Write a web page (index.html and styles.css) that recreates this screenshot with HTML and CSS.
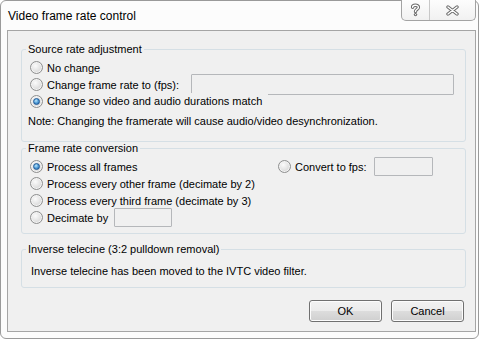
FILE: index.html
```html
<!DOCTYPE html>
<html>
<head>
<meta charset="utf-8">
<link rel="stylesheet" href="styles.css">
</head>
<body>
<div class="window">
  <div class="titlebar">
    <span class="title">Video frame rate control</span>
    <div class="caption-buttons">
      <div class="cb help">
        <svg width="11" height="14" viewBox="0 0 11 14">
          <path d="M2.6 4.2 C2.6 1.6 8.4 1.6 8.4 4.2 C8.4 6.4 5.5 6.2 5.5 8.6" fill="none" stroke="#6b6b6b" stroke-width="3.4" stroke-linecap="round"/>
          <circle cx="5.5" cy="11.6" r="1.7" fill="#6b6b6b"/>
          <path d="M2.6 4.2 C2.6 1.6 8.4 1.6 8.4 4.2 C8.4 6.4 5.5 6.2 5.5 8.6" fill="none" stroke="#fff" stroke-width="1.4" stroke-linecap="round"/>
          <circle cx="5.5" cy="11.6" r="0.7" fill="#fff"/>
        </svg>
      </div>
      <div class="cb close">
        <svg width="13" height="11" viewBox="0 0 13 11">
          <path d="M2 2 L11 9 M11 2 L2 9" fill="none" stroke="#6b6b6b" stroke-width="3.4" stroke-linecap="round"/>
          <path d="M2 2 L11 9 M11 2 L2 9" fill="none" stroke="#fff" stroke-width="1.4" stroke-linecap="round"/>
        </svg>
      </div>
    </div>
  </div>
  <div class="client">
    <div class="group g1">
      <span class="legend">Source rate adjustment</span>
      <div class="row"><span class="radio"></span><span>No change</span></div>
      <div class="row"><span class="opt w-fps"><span class="radio"></span><span>Change frame rate to (fps):</span></span><span class="input in-fps"></span></div>
      <div class="row over"><span class="radio checked"></span><span class="cover">Change so video and audio durations match</span></div>
      <div class="row note">Note: Changing the framerate will cause audio/video desynchronization.</div>
    </div>
    <div class="group g2">
      <span class="legend">Frame rate conversion</span>
      <div class="cols">
        <div class="col">
          <div class="row"><span class="radio checked"></span><span>Process all frames</span></div>
          <div class="row"><span class="radio"></span><span>Process every other frame (decimate by 2)</span></div>
          <div class="row"><span class="radio"></span><span>Process every third frame (decimate by 3)</span></div>
          <div class="row"><span class="opt w-dec"><span class="radio"></span><span>Decimate by</span></span><span class="input in-dec"></span></div>
        </div>
        <div class="col">
          <div class="row"><span class="opt w-conv"><span class="radio"></span><span>Convert to fps:</span></span><span class="input in-conv"></span></div>
        </div>
      </div>
    </div>
    <div class="group g3">
      <span class="legend">Inverse telecine (3:2 pulldown removal)</span>
      <div class="row">Inverse telecine has been moved to the IVTC video filter.</div>
    </div>
    <div class="buttons">
      <button class="btn">OK</button>
      <button class="btn">Cancel</button>
    </div>
  </div>
</div>
</body>
</html>
```
FILE: styles.css
```css
html, body {
  margin: 0;
  padding: 0;
}
body {
  width: 481px;
  height: 340px;
  background: #ffffff;
  overflow: hidden;
  font-family: "Liberation Sans", Arial, sans-serif;
  font-size: 11px;
  color: #000;
}
.window {
  box-sizing: border-box;
  width: 479px;
  height: 339px;
  border: 1px solid #9a9a9a;
  border-radius: 6px;
  background: #fcfcfc;
  display: flex;
  flex-direction: column;
}
.titlebar {
  height: 29px;
  display: flex;
  align-items: flex-start;
  justify-content: space-between;
}
.title {
  font-size: 12px;
  line-height: 14px;
  padding: 8px 0 0 7px;
  color: #000;
}
.caption-buttons {
  display: flex;
  margin: -1px 2px 0 0;
  border: 1px solid #a3a3a3;
  border-top: none;
  border-radius: 0 0 5px 5px;
  background: linear-gradient(#fdfdfd, #f1f1f1);
  height: 20px;
  overflow: hidden;
}
.cb {
  display: flex;
  align-items: center;
  justify-content: center;
}
.cb.help {
  width: 27px;
  border-right: 1px solid #c8c8c8;
}
.cb.close {
  width: 45px;
}
.client {
  flex: 1;
  margin: 0 2px 6px 6px;
  border: 1px solid #a5a5a5;
  background: #f0f0f0;
  display: flex;
  flex-direction: column;
}
.group {
  position: relative;
  border: 1px solid #d5dfe5;
  border-radius: 3px;
  margin: 0 9px 0 13px;
  padding-left: 8px;
}
.legend {
  position: absolute;
  left: 4px;
  top: -7px;
  line-height: 13px;
  padding: 0 2px;
  background: #f0f0f0;
}
.g1 {
  margin-top: 18px;
  padding-top: 9px;
  padding-bottom: 12px;
}
.g2 {
  margin-top: 6px;
  padding-top: 9px;
  padding-bottom: 7px;
}
.g3 {
  margin-top: 15px;
  padding-top: 12px;
  padding-bottom: 8px;
  padding-left: 9px;
}
.row {
  height: 17px;
  display: flex;
  align-items: center;
  white-space: nowrap;
}
.row.note {
  margin-top: 2px;
  margin-left: -2px;
}
.row.over {
  position: relative;
  z-index: 1;
}
.cover {
  background: #f0f0f0;
  line-height: 17px;
  padding-right: 6px;
}
.opt {
  display: flex;
  align-items: center;
}
.w-fps { width: 161px; }
.w-dec { width: 84px; }
.w-conv { width: 96px; }
.cols {
  display: grid;
  grid-template-columns: 248px 1fr;
}
.radio {
  box-sizing: border-box;
  width: 13px;
  height: 13px;
  flex: none;
  border-radius: 50%;
  border: 1px solid #8e8f8f;
  background: radial-gradient(circle at 40% 35%, #fbfbfb 0%, #e6e6e6 45%, #c9c9c9 100%);
  box-shadow: inset 0 0 0 1px #f4f4f4;
  margin-right: 4px;
  position: relative;
}
.radio.checked::after {
  content: "";
  position: absolute;
  left: 2px;
  top: 2px;
  width: 7px;
  height: 7px;
  box-sizing: border-box;
  border-radius: 50%;
  border: 1px solid #1e5896;
  background: radial-gradient(circle at 40% 35%, #bfe6fb 0%, #5aa5dc 45%, #1b5fa8 100%);
}
.input {
  box-sizing: border-box;
  display: block;
  border: 1px solid #b5b7ba;
  border-radius: 1px;
  background: #f0f0f0;
  flex: none;
}
.in-fps {
  width: 263px;
  height: 21px;
  margin: -2px 0;
}
.in-dec {
  width: 58px;
  height: 19px;
  margin: -1px 0;
}
.in-conv {
  width: 59px;
  height: 19px;
  margin: -1px 0;
}
.buttons {
  display: flex;
  justify-content: flex-end;
  gap: 9px;
  margin: 12px 11px 0 0;
}
.btn {
  box-sizing: border-box;
  width: 73px;
  height: 22px;
  padding: 0;
  border: 1px solid #707070;
  border-radius: 3px;
  background: linear-gradient(#f2f2f2 0%, #ebebeb 50%, #dddddd 50%, #cfcfcf 100%);
  box-shadow: inset 0 0 0 1px #fcfcfc;
  font-family: "Liberation Sans", Arial, sans-serif;
  font-size: 11px;
  color: #000;
}
```
